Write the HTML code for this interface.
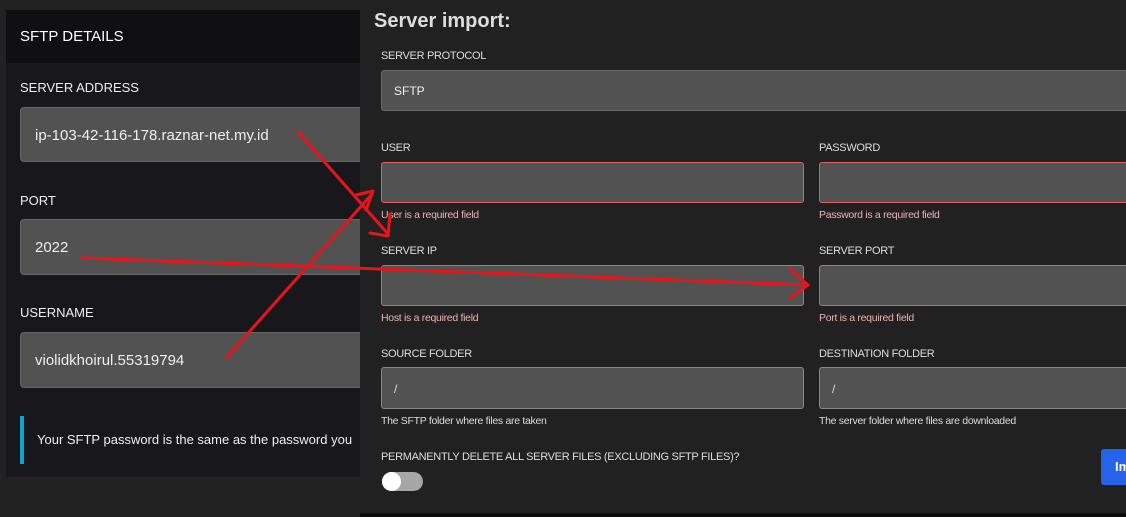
<!DOCTYPE html><html><head><style>
*{box-sizing:border-box;margin:0;padding:0}
body{width:1126px;height:517px;background:#222;font-family:"Liberation Sans",sans-serif;position:relative;overflow:hidden}
.a{position:absolute}
.lab{position:absolute;font-size:11px;color:#ddd;letter-spacing:-.3px}
.in{position:absolute;background:#525252;border:1px solid #6a6a6a;border-radius:3px}
.err{border-color:#e06060}
.et{position:absolute;font-size:10.5px;color:#f0b0b0;letter-spacing:-.3px}
.ht{position:absolute;font-size:10.5px;color:#ddd;letter-spacing:-.3px}
.ll{position:absolute;left:20px;font-size:13px;color:#eee}
.li{position:absolute;left:20px;width:360px;background:#525252;border:1px solid #666;border-radius:4px;color:#eee;font-size:15px;padding-left:14px}
</style></head><body>
<div class="a" style="left:6px;top:10px;width:360px;height:467px;background:#18181c"></div>
<div class="a" style="left:6px;top:10px;width:360px;height:53px;background:#101012"></div>
<div class="a" style="left:20px;top:28px;color:#fff;font-size:15px">SFTP DETAILS</div>
<div class="ll" style="top:80px">SERVER ADDRESS</div>
<div class="li" style="top:107px;height:55px;line-height:55px">ip-103-42-116-178.raznar-net.my.id</div>
<div class="ll" style="top:193px">PORT</div>
<div class="li" style="top:219px;height:56px;line-height:56px">2022</div>
<div class="ll" style="top:305px">USERNAME</div>
<div class="li" style="top:332px;height:56px;line-height:56px">violidkhoirul.55319794</div>
<div class="a" style="left:20px;top:416px;width:4px;height:48px;background:#0ea5d0"></div>
<div class="a" style="left:37px;top:432px;color:#eee;font-size:13px;white-space:nowrap">Your SFTP password is the same as the password you</div>

<div class="a" style="left:360px;top:0;width:766px;height:513px;background:#212121"></div>
<div class="a" style="left:360px;top:513px;width:766px;height:4px;background:#0c0c0c"></div>
<div class="a" style="left:374px;top:10px;color:#ddd;font-size:20px;font-weight:bold">Server import:</div>
<div class="lab" style="left:381px;top:50px">SERVER PROTOCOL</div>
<div class="in" style="left:381px;top:70px;width:760px;height:41px;color:#eee;font-size:12px;padding-left:12px;line-height:41px">SFTP</div>
<div class="lab" style="left:381px;top:142px">USER</div>
<div class="lab" style="left:819px;top:142px">PASSWORD</div>
<div class="in err" style="left:381px;top:162px;width:423px;height:41px"></div>
<div class="in err" style="left:819px;top:162px;width:320px;height:41px"></div>
<div class="et" style="left:381px;top:209px">User is a required field</div>
<div class="et" style="left:819px;top:209px">Password is a required field</div>
<div class="lab" style="left:381px;top:245px">SERVER IP</div>
<div class="lab" style="left:819px;top:245px">SERVER PORT</div>
<div class="in err" style="left:381px;top:265px;width:423px;height:41px"></div>
<div class="in err" style="left:819px;top:265px;width:320px;height:41px"></div>
<div class="et" style="left:381px;top:312px">Host is a required field</div>
<div class="et" style="left:819px;top:312px">Port is a required field</div>
<div class="lab" style="left:381px;top:348px">SOURCE FOLDER</div>
<div class="lab" style="left:819px;top:348px">DESTINATION FOLDER</div>
<div class="in" style="left:381px;top:367px;width:423px;height:42px;border-color:#888;color:#ddd;font-size:12px;padding-left:12px;line-height:42px">/</div>
<div class="in" style="left:819px;top:367px;width:320px;height:42px;border-color:#888;color:#ddd;font-size:12px;padding-left:12px;line-height:42px">/</div>
<div class="ht" style="left:381px;top:415px">The SFTP folder where files are taken</div>
<div class="ht" style="left:819px;top:415px">The server folder where files are downloaded</div>
<div class="lab" style="left:381px;top:451px">PERMANENTLY DELETE ALL SERVER FILES (EXCLUDING SFTP FILES)?</div>
<div class="a" style="left:382px;top:472px;width:41px;height:19px;border-radius:10px;background:#a6a6a6"></div>
<div class="a" style="left:382px;top:472px;width:19px;height:19px;border-radius:50%;background:#fff"></div>
<div class="a" style="left:1101px;top:449px;width:40px;height:36px;background:#2563eb;border-radius:3px;color:#fff;font-weight:bold;font-size:13px;padding:10px 0 0 14px">Im</div>

<svg class="a" style="left:0;top:0" width="1126" height="517"><g stroke="#e8141c" stroke-width="3" fill="none" stroke-linecap="round" stroke-linejoin="round">
<polyline points="298,132 388,234"/><polyline points="390,214 388,236 370,233"/>
<polyline points="226,358 372,194"/><polyline points="356,195 373,191 366,210"/>
<polyline points="82,258 300,266 808,285"/><polyline points="790,269 808,285 790,298"/>
</g></svg>
</body></html>
